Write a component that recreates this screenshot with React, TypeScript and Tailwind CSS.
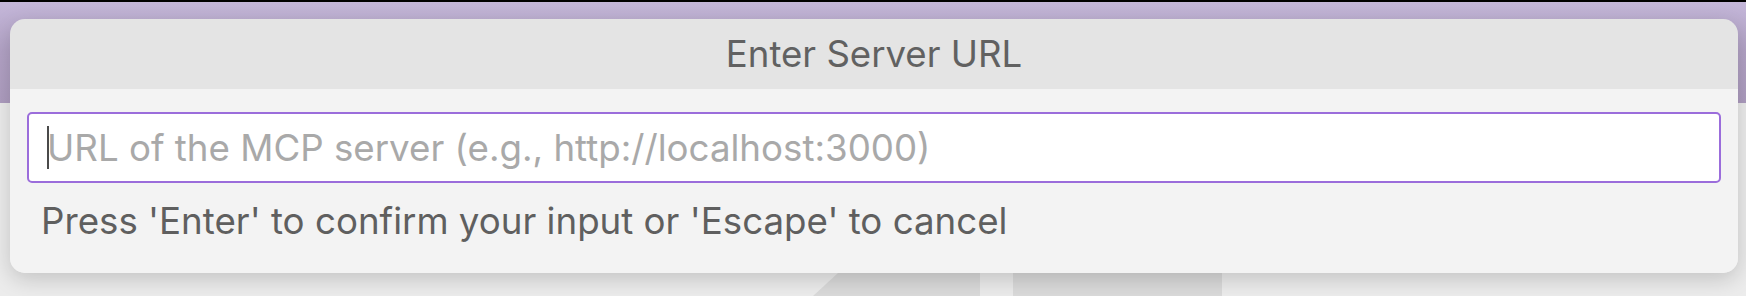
import { FC } from "react"

const font = { fontFamily: "Inter, 'Noto Sans', sans-serif" }

const Caret: FC = () => <span className="h-[43px] w-[2px] flex-shrink-0 bg-[#4a4a4a]" />

const QuickInput: FC = () => (
	<div className="absolute left-[10px] top-[19px] flex h-[254px] w-[1728px] flex-col overflow-hidden rounded-[15px] shadow-[0_6px_22px_rgba(0,0,0,0.18)]">
		<div className="flex h-[70px] items-center justify-center bg-[#e4e4e4] text-[36.6px] text-[#616161]">
			Enter Server URL
		</div>
		<div className="flex-1 bg-[#f3f3f3] px-[17px] pt-[23px]">
			<div className="flex h-[71px] items-center rounded-[5px] border-2 border-[#9b6ddb] bg-white pl-[18px] text-[36.7px] text-[#a9a9a9]">
				<Caret />
				<span className="-ml-[2px]">URL of the MCP server (e.g., http://localhost:3000)</span>
			</div>
			<div className="mt-[16px] pl-[14px] text-[36.7px] leading-[44px] text-[#5f5f5f]">
				Press 'Enter' to confirm your input or 'Escape' to cancel
			</div>
		</div>
	</div>
)

export default function App() {
	return (
		<div className="relative h-[296px] w-[1746px] overflow-hidden bg-[#ececec]" style={font}>
			<div className="h-[2px] bg-black" />
			<div className="h-[101px] bg-linear-to-b from-[#c4b7d9] via-[#b3a3c6] to-[#ae9dc0]" />
			<div className="flex h-[193px] items-end">
				<div className="ml-[813px] h-[23px] w-[167px] bg-[#dadada] [clip-path:polygon(25px_0,100%_0,100%_100%,0_100%)]" />
				<div className="h-[23px] w-[33px] bg-[#ebebeb]" />
				<div className="h-[23px] w-[209px] bg-[#dadada]" />
			</div>
			<QuickInput />
		</div>
	)
}
